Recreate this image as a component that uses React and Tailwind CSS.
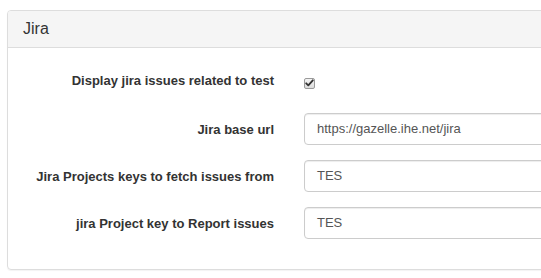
export default function App() {
  const rows = [
    { label: "Jira base url", value: "https://gazelle.ihe.net/jira" },
    { label: "Jira Projects keys to fetch issues from", value: "TES" },
    { label: "jira Project key to Report issues", value: "TES" },
  ];
  return (
    <div className="w-[541px] h-[278px] overflow-hidden bg-white" style={{ fontFamily: '"Liberation Sans", Arial, sans-serif' }}>
      <div className="ml-[7px] mt-[10px] w-[600px] border border-[#dddddd] rounded-[4px] shadow-[0_1px_1px_rgba(0,0,0,0.05)]">
        <div className="h-[37px] bg-[#f5f5f5] border-b border-[#dddddd] rounded-t-[3px] px-[15px] flex items-center">
          <span className="text-[16px] leading-[18px] text-[#333333]">Jira</span>
        </div>
        <div className="px-[15px] pt-[15px] pb-[15px]">
          <div className="flex items-center h-[35px] mb-[15px]">
            <div className="w-[251px] shrink-0 text-right text-[13px] font-bold text-[#333333]">Display jira issues related to test</div>
            <div className="ml-[30px] pt-[5px]">
              <span className="flex items-center justify-center w-[11px] h-[11px] rounded-[2px] border border-[#9a9a9a] bg-gradient-to-b from-[#f4f4f4] to-[#dcdcdc]">
                <svg width="9" height="8" viewBox="0 0 9 8">
                  <path d="M1.2 4.3 L3.3 6.4 L7.8 1.3" fill="none" stroke="#333" strokeWidth="1.8" strokeLinecap="round" strokeLinejoin="round" />
                </svg>
              </span>
            </div>
          </div>
          {rows.map((r, i) => (
            <div key={i} className="flex items-center mb-[15px]">
              <div className="w-[251px] shrink-0 text-right text-[13px] font-bold text-[#333333] pt-[1px]">{r.label}</div>
              <div className="ml-[30px] w-[300px] shrink-0 h-[32px] border border-[#cccccc] rounded-[4px] px-[12px] flex items-center text-[13px] text-[#555555] shadow-[inset_0_1px_1px_rgba(0,0,0,0.075)]">
                {r.value}
              </div>
            </div>
          ))}
        </div>
      </div>
    </div>
  );
}
